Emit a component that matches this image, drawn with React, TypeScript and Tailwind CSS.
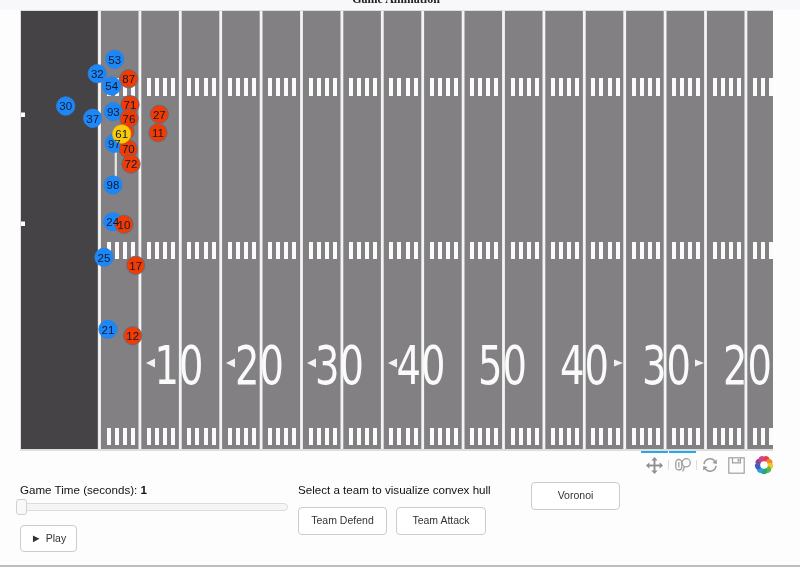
import React from "react";

const step = 40.4;
const lines = Array.from({ length: 17 }, (_, i) => 99.5 + step * i);
const hashY: [number, number][] = [
  [78, 18],
  [242, 17],
  [428, 17],
];
const numbers: [string, number][] = [
  ["10", 179],
  ["20", 259.5],
  ["30", 339.5],
  ["40", 421],
  ["50", 502.5],
  ["40", 584.5],
  ["30", 666.5],
  ["20", 747.5],
];
const leftArrows = [146, 226, 307, 388];
const rightArrows = [623, 704];

type P = [string, number, number, "b" | "r" | "y"];
const players: P[] = [
  ["53", 114.7, 59.3, "b"],
  ["32", 97.3, 73.7, "b"],
  ["87", 128.7, 78.7, "r"],
  ["54", 111.7, 86, "b"],
  ["30", 65.7, 106, "b"],
  ["37", 92.7, 118.3, "b"],
  ["93", 113.3, 111.7, "b"],
  ["71", 130, 104.7, "r"],
  ["27", 159.3, 114.3, "r"],
  ["11", 158, 132.7, "r"],
  ["", 125, 131.7, "r"],
  ["97", 114.3, 143.3, "b"],
  ["76", 129, 118.5, "r"],
  ["70", 128.3, 149, "r"],
  ["61", 121.7, 134, "y"],
  ["72", 131, 164, "r"],
  ["98", 113, 185, "b"],
  ["24", 112.7, 221.7, "b"],
  ["10", 124, 224.3, "r"],
  ["25", 104, 257.3, "b"],
  ["17", 135.7, 265.3, "r"],
  ["21", 108, 329.3, "b"],
  ["12", 132.7, 335.7, "r"],
];
const fills = { b: "#1e87f8", r: "#f03c02", y: "#fbcb0a" };
const strokes = { b: "#2a83e0", r: "#4d7096", y: "#e8be10" };

function Field() {
  return (
    <svg width={753} height={441} viewBox="20 10 753 441" className="block ml-[20px]">
      <rect x={20} y={10} width={753} height={441} fill="#dedede" />
      <rect x={21} y={11} width={752} height={438} fill="#828083" />
      <rect x={21} y={11} width={76.5} height={438} fill="#454345" />
      {lines.map((x) => (
        <rect key={x} x={x - 1.4} y={11} width={2.8} height={438} fill="#f4f4f4" />
      ))}
      <rect x={21} y={112.5} width={4} height={4.5} fill="#ffffff" />
      <rect x={21} y={221.5} width={4} height={4.5} fill="#ffffff" />
      <rect x={114.7} y={150} width={2.2} height={29} fill="#e6e6e6" />
      {lines.map((x) =>
        hashY.map(([y, h]) =>
          [0, 1, 2, 3].map((k) => (
            <rect key={`${x}-${y}-${k}`} x={Math.round(x + 7 + 8.1 * k)} y={y} width={4} height={h} fill="#fbfbfb" />
          ))
        )
      )}
      {numbers.map(([t, x], i) => (
        <text
          key={i}
          x={x}
          y={384}
          fontSize={54}
          textAnchor="middle"
          textLength={49}
          lengthAdjust="spacingAndGlyphs"
          fill="#fafafa"
          className="font-['DejaVu_Sans',sans-serif]"
        >
          {t}
        </text>
      ))}
      {leftArrows.map((x) => (
        <polygon key={x} points={`${x},363 ${x + 9},358.5 ${x + 9},367.5`} fill="#f2f2f2" />
      ))}
      {rightArrows.map((x) => (
        <polygon key={x} points={`${x},363 ${x - 9},359.5 ${x - 9},366.5`} fill="#f2f2f2" />
      ))}
      {players.map(([n, x, y, c], i) => (
        <circle key={i} cx={x} cy={y} r={9.2} fill={fills[c]} stroke={strokes[c]} strokeWidth={0.8} />
      ))}
      {players.map(([n, x, y], i) =>
        n ? (
          <text
            key={i}
            x={x}
            y={y + 4.2}
            fontSize={11.5}
            textAnchor="middle"
            fill="#0b1a33"
            className="font-['Liberation_Sans',sans-serif]"
          >
            {n}
          </text>
        ) : null
      )}
    </svg>
  );
}

function MoveIcon() {
  return (
    <svg width={17} height={17} viewBox="0 0 16 16" fill="#909090">
      <rect x={7.1} y={2} width={1.8} height={12} />
      <rect x={2} y={7.1} width={12} height={1.8} />
      <polygon points="8,0 11,3.2 5,3.2" />
      <polygon points="8,16 11,12.8 5,12.8" />
      <polygon points="0,8 3.2,5 3.2,11" />
      <polygon points="16,8 12.8,5 12.8,11" />
    </svg>
  );
}

function WheelIcon() {
  return (
    <svg width={16} height={14} viewBox="0 0 16 14" fill="none" stroke="#a0a0a0" strokeWidth={1.3}>
      <rect x={0.8} y={1.5} width={6} height={10.5} rx={3} />
      <line x1={3.8} y1={4} x2={3.8} y2={9.5} />
      <circle cx={11.2} cy={4.8} r={4.1} />
      <line x1={9.4} y1={8.6} x2={7.8} y2={13.5} />
    </svg>
  );
}

function ResetIcon() {
  return (
    <svg width={16} height={16} viewBox="0 0 16 16" fill="none" stroke="#9a9a9a" strokeWidth={1.5}>
      <path d="M2 7.2 A6 6 0 0 1 13 4.6" />
      <path d="M14 8.8 A6 6 0 0 1 3 11.4" />
      <polygon points="14.8,2.4 14.8,7 10.4,6" fill="#9a9a9a" stroke="none" />
      <polygon points="1.2,13.6 1.2,9 5.6,10" fill="#9a9a9a" stroke="none" />
    </svg>
  );
}

function SaveIcon() {
  return (
    <svg width={17} height={17} viewBox="0 0 17 17" fill="none" stroke="#a0a0a0" strokeWidth={1.2}>
      <rect x={0.8} y={0.8} width={15.4} height={15.4} />
      <path d="M4.5 1 V5.8 H12.5 V1" />
      <rect x={9.6} y={2} width={1.8} height={2.6} fill="#a0a0a0" stroke="none" />
    </svg>
  );
}

function HoverWheel() {
  const segs = ["#e83c3c", "#f08a24", "#f3c623", "#5cb85c", "#27a96c", "#2f9fd8", "#3b5fc4", "#7a4a9e", "#d6408b"];
  return (
    <svg width={20} height={20} viewBox="-10 -10 20 20">
      {segs.map((c, i) => (
        <ellipse key={c} cx={0} cy={-6} rx={3.2} ry={3.2} fill={c} transform={`rotate(${i * 40 + 20})`} />
      ))}
      <circle r={3.8} fill="#ffffff" />
    </svg>
  );
}

function Btn({ children, className }: { children: React.ReactNode; className: string }) {
  return (
    <button
      className={`flex items-center justify-center border border-[#cccccc] rounded-[4px] bg-white text-[10.5px] text-[#333333] font-['Liberation_Sans',sans-serif] ${className}`}
    >
      {children}
    </button>
  );
}

export default function App() {
  return (
    <div className="w-[800px] h-[573px] overflow-hidden bg-white font-['Liberation_Sans',sans-serif] blur-[0.3px]">
      <div className="h-[567px] bg-[#fefdfe] border-b-2 border-[#bdbdbd] flex flex-col">
        <div className="h-[10px] bg-[#f8f7fa] overflow-hidden flex items-end justify-center">
          <div className="font-['Liberation_Serif',serif] font-bold text-[12px] leading-[14px] mb-[4px] ml-[-8px] text-[#222222] shrink-0">
            Game Animation
          </div>
        </div>
        <Field />
        <div className="flex ml-[641px] h-[26px]">
          <div className="w-[27px] border-t-2 border-[#26aae1] flex items-center justify-center"><MoveIcon /></div>
          <div className="w-[1px] h-[10px] mt-[9px] bg-[#dddddd]" />
          <div className="w-[27px] border-t-2 border-[#26aae1] flex items-center justify-center"><WheelIcon /></div>
          <div className="w-[1px] h-[10px] mt-[9px] bg-[#dddddd]" />
          <div className="w-[26px] border-t-2 border-transparent flex items-center justify-center"><ResetIcon /></div>
          <div className="w-[27px] border-t-2 border-transparent flex items-center justify-center"><SaveIcon /></div>
          <div className="w-[27px] border-t-2 border-transparent flex items-center justify-center"><HoverWheel /></div>
        </div>
        <div className="flex pl-[20px] pt-[6px]">
          <div className="w-[278px] shrink-0">
            <div className="text-[11.6px] leading-[14px] text-[#111111]">
              Game Time (seconds): <b>1</b>
            </div>
            <div className="relative mt-[6px] ml-[2px] w-[266px] h-[8px] rounded-[4px] bg-[#f5f5f5] border border-[#dcdcdc]">
              <div className="absolute left-[-7px] top-[-5px] w-[11px] h-[16px] rounded-[3px] bg-[#f9f9f9] border border-[#d2d2d2]" />
            </div>
            <Btn className="w-[57px] h-[27px] mt-[14px] gap-[4px]">
              <span className="text-[11px]">►</span> Play
            </Btn>
          </div>
          <div className="w-[233px] shrink-0">
            <div className="text-[11.6px] leading-[14px] text-[#111111]">Select a team to visualize convex hull</div>
            <div className="flex gap-[9px] mt-[10px]">
              <Btn className="w-[89px] h-[28px]">Team Defend</Btn>
              <Btn className="w-[90px] h-[28px]">Team Attack</Btn>
            </div>
          </div>
          <Btn className="w-[89px] h-[28px] mt-[-1px]">Voronoi</Btn>
        </div>
      </div>
    </div>
  );
}
